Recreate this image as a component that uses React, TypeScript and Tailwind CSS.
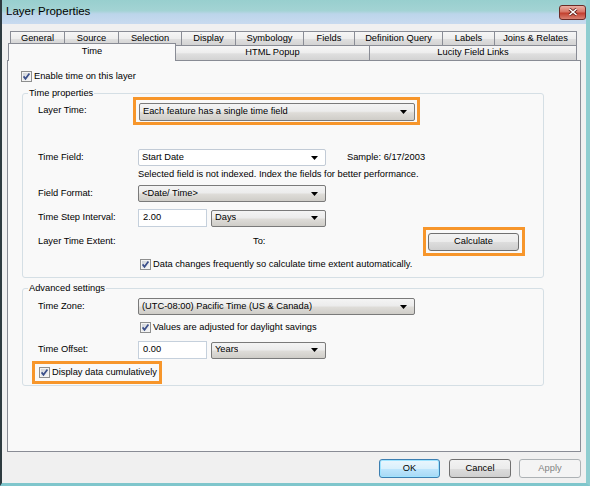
import React from 'react';

const Check: React.FC = () => (
  <svg width="11" height="11" viewBox="0 0 11 11" className="shrink-0">
    <defs>
      <linearGradient id="cbg" x1="0" y1="0" x2="1" y2="1">
        <stop offset="0" stopColor="#cfd3d8" />
        <stop offset="1" stopColor="#f7f7f7" />
      </linearGradient>
    </defs>
    <rect x="0.5" y="0.5" width="10" height="10" fill="#f4f4f4" stroke="#8e8f8f" />
    <rect x="2" y="2" width="7" height="7" fill="url(#cbg)" />
    <path d="M2.6 5.4 L4.5 7.8 L8.4 2.6" stroke="#3b4f8a" strokeWidth="1.7" fill="none" />
  </svg>
);

const Arrow: React.FC = () => (
  <svg width="7" height="4" viewBox="0 0 7 4" className="shrink-0">
    <path d="M0 0H7L3.5 4Z" fill="#000" />
  </svg>
);

const Combo: React.FC<{ w: string; value: string; plain?: boolean; h?: string }> = ({ w, value, plain, h = 'h-[17px]' }) => (
  <div
    className={`${w} ${h} flex items-center justify-between pl-[3px] pr-[7px] rounded-[2px] ${
      plain
        ? 'bg-white border border-[#c2cbd6]'
        : 'border border-[#7a7a7a] bg-[linear-gradient(#f4f4f4,#ececec_45%,#dedcd8_55%,#cfcdc8)]'
    }`}
  >
    <span className="truncate">{value}</span>
    <Arrow />
  </div>
);

const TextBox: React.FC<{ value: string }> = ({ value }) => (
  <div className="w-[69px] h-[18px] flex items-center pl-[4px] bg-white border border-[#c5d0dc]">{value}</div>
);

const CheckRow: React.FC<{ label: string; className?: string }> = ({ label, className = '' }) => (
  <div className={`flex items-center gap-[2px] h-[11px] ${className}`}>
    <Check />
    <span>{label}</span>
  </div>
);

const Legend: React.FC<{ text: string }> = ({ text }) => (
  <div className="-mt-[7px] h-[12px] leading-[12px] ml-[5px] px-[1px] w-fit bg-[#f9f9f9]">{text}</div>
);

const row1 = [
  ['General', 'w-[55px]'],
  ['Source', 'w-[54px]'],
  ['Selection', 'w-[63px]'],
  ['Display', 'w-[54px]'],
  ['Symbology', 'w-[68px]'],
  ['Fields', 'w-[51px]'],
  ['Definition Query', 'w-[88px]'],
  ['Labels', 'w-[52px]'],
  ['Joins & Relates', 'w-[82px]'],
];

const tabBg = 'bg-[linear-gradient(#f6f6f6,#ededed_50%,#dfdfdf_55%,#d3d3d3)]';

const App: React.FC = () => {
  return (
    <div className="w-[590px] h-[486px] flex flex-col bg-[#f0f0f0] border-l-2 border-l-[#2e3b40] border-r-4 border-r-[#8fcdd0] border-b-[3px] border-b-[#7fc6cc] font-['Liberation_Sans',Arial,sans-serif] text-[9.3px] text-black leading-none whitespace-nowrap overflow-hidden">
      {/* Title bar */}
      <div className="h-[24px] shrink-0 flex items-center justify-between pl-[4px] pr-0 bg-[linear-gradient(#98cfce,#a3d3d4_45%,#bcd5ea_58%,#c8daef)]">
        <span className="text-[11.5px]">Layer Properties</span>
        <div className="w-[27px] h-[15px] flex items-center justify-center rounded-[3px] border border-[#6b2b26] bg-[linear-gradient(#eab0a4,#d77565_45%,#c2402f_55%,#d98272)]">
          <svg width="10" height="8" viewBox="0 0 10 8">
            <path d="M1.5 1L8.5 7M8.5 1L1.5 7" stroke="#5a1a14" strokeWidth="3" />
            <path d="M1.5 1L8.5 7M8.5 1L1.5 7" stroke="#fff" strokeWidth="1.6" />
          </svg>
        </div>
      </div>

      {/* Body */}
      <div className="flex-1 flex flex-col pl-[5px] pr-[5px] pt-[7px] pb-[5px]">
        {/* Tabs */}
        <div className="flex h-[14px] pl-[3px]">
          {row1.map(([t, w]) => (
            <div key={t} className={`${w} ${tabBg} flex items-center justify-center border-t border-r border-[#898c95] first:border-l`}>
              {t}
            </div>
          ))}
        </div>
        <div className="flex items-end h-[15px] pl-[1px]">
          <div className="relative z-10 w-[168px] h-[18px] -mb-[1px] flex justify-center pt-[3px] bg-[#f9f9f9] border border-b-0 border-[#898c95]">
            Time
          </div>
          <div className={`w-[194px] h-[15px] ${tabBg} flex items-center justify-center border-t border-r border-[#898c95]`}>HTML Popup</div>
          <div className={`w-[207px] h-[15px] ${tabBg} flex items-center justify-center border-t border-r border-[#898c95]`}>Lucity Field Links</div>
        </div>

        {/* Panel */}
        <div className="h-[392px] bg-[#f9f9f9] border border-[#898c95] flex flex-col">
          <CheckRow label="Enable time on this layer" className="mt-[10px] ml-[13px]" />

          {/* Time properties */}
          <div className="mt-[11px] ml-[14px] w-[522px] border border-[#d5dfe5] rounded-[3px] flex flex-col pb-[7px]">
            <Legend text="Time properties" />
            <div className="-mt-[2px] flex items-center pl-[15px]">
              <span className="w-[95px]">Layer Time:</span>
              <div className="w-[287px] h-[28px] border-[3px] border-[#f7962b] pl-[3px] pt-[3px]">
                <Combo w="w-[276px]" h="h-[18px]" value="Each feature has a single time field" />
              </div>
            </div>

            <div className="mt-[24px] flex items-center pl-[15px] h-[17px]">
              <span className="w-[100px]">Time Field:</span>
              <Combo w="w-[188px]" value="Start Date" plain />
              <span className="ml-[21px]">Sample: 6/17/2003</span>
            </div>
            <div className="mt-[3px] h-[11px] flex items-center pl-[115px]">
              Selected field is not indexed. Index the fields for better performance.
            </div>

            <div className="mt-[5px] flex items-center pl-[15px]">
              <span className="w-[100px]">Field Format:</span>
              <Combo w="w-[188px]" value="<Date/ Time>" />
            </div>

            <div className="mt-[7px] flex items-center pl-[15px]">
              <span className="w-[100px]">Time Step Interval:</span>
              <TextBox value="2.00" />
              <div className="ml-[4px]">
                <Combo w="w-[115px]" value="Days" />
              </div>
            </div>

            <div className="flex items-center pl-[15px] pr-[18px] h-[29px]">
              <span className="w-[215px]">Layer Time Extent:</span>
              <span>To:</span>
              <div className="ml-auto w-[102px] h-[29px] border-[3px] border-[#f7962b] pl-[2px] pt-[3px]">
                <div className="w-[91px] h-[18px] flex items-center justify-center rounded-[3px] border border-[#707070] bg-[linear-gradient(#f2f2f2,#ebebeb_50%,#dddddd_51%,#cfcfcf)]">
                  Calculate
                </div>
              </div>
            </div>

            <CheckRow label="Data changes frequently so calculate time extent automatically." className="mt-[3px] ml-[117px]" />
          </div>

          {/* Advanced settings */}
          <div className="mt-[10px] ml-[14px] w-[522px] border border-[#d5dfe5] rounded-[3px] flex flex-col pb-[1px]">
            <Legend text="Advanced settings" />
            <div className="mt-[4px] flex items-center pl-[15px]">
              <span className="w-[100px]">Time Zone:</span>
              <Combo w="w-[277px]" value="(UTC-08:00) Pacific Time (US & Canada)" />
            </div>
            <CheckRow label="Values are adjusted for daylight savings" className="mt-[7px] ml-[117px]" />
            <div className="mt-[8px] flex items-center pl-[15px]">
              <span className="w-[100px]">Time Offset:</span>
              <TextBox value="0.00" />
              <div className="ml-[4px]">
                <Combo w="w-[115px]" value="Years" />
              </div>
            </div>
            <div className="mt-[2px] ml-[9px] w-[130px] h-[23px] border-[3px] border-[#f7962b] flex items-center pl-[4px] gap-[2px]">
              <Check />
              <span>Display data cumulatively</span>
            </div>
          </div>
        </div>

        {/* Buttons */}
        <div className="mt-[7px] flex justify-end h-[19px]">
          <div className="w-[61px] h-[19px] flex items-center justify-center rounded-[3px] border border-[#3c7fb1] bg-[linear-gradient(#eaf6fd,#d9f0fc_50%,#bee6fd_51%,#a7d9f5)] shadow-[inset_0_0_0_1px_#9fe4ff]">
            OK
          </div>
          <div className="ml-[9px] w-[62px] h-[19px] flex items-center justify-center rounded-[3px] border border-[#707070] bg-[linear-gradient(#f2f2f2,#ebebeb_50%,#dddddd_51%,#cfcfcf)]">
            Cancel
          </div>
          <div className="ml-[8px] w-[62px] h-[19px] flex items-center justify-center rounded-[3px] border border-[#adb2b5] bg-[#f4f4f4] text-[#838383]">
            Apply
          </div>
        </div>
      </div>
    </div>
  );
};

export default App;
